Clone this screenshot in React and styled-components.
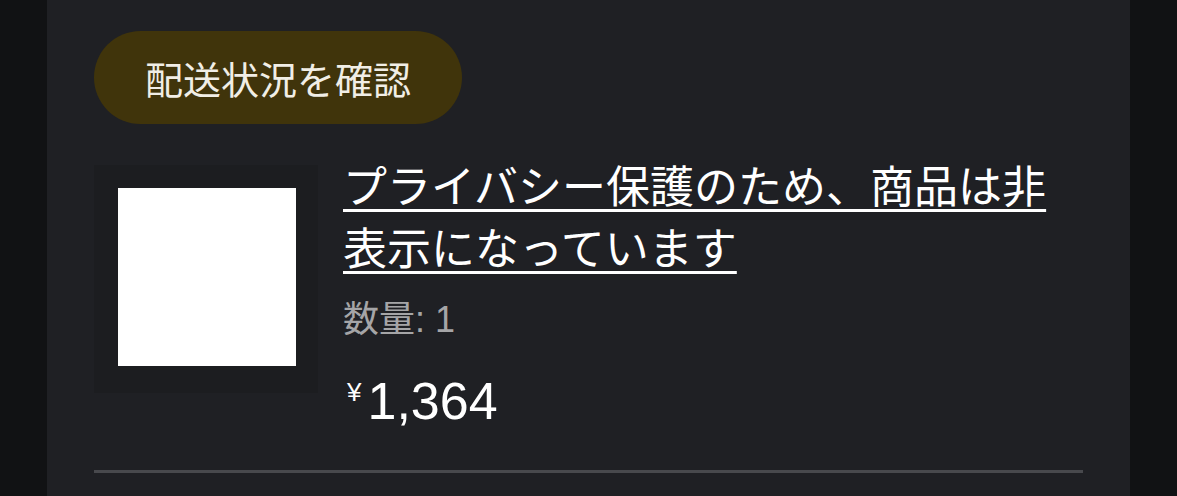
import React from 'react';
import styled, { createGlobalStyle } from 'styled-components';

const GlobalStyle = createGlobalStyle`
  html, body {
    margin: 0;
    padding: 0;
    background: #111214;
    font-family: "Noto Sans CJK JP", "Liberation Sans", sans-serif;
  }
`

const Panel = styled.div`
  margin: 0 47px;
  min-height: 496px;
  box-sizing: border-box;
  background-color: #1f2024;
  padding: 31px 47px 0;
`

const TrackButton = styled.button`
  display: inline-flex;
  align-items: center;
  justify-content: center;
  height: 93px;
  padding: 0 51px;
  border: none;
  border-radius: 47px;
  background-color: #40340b;
  color: #f1eee6;
  font-family: "Noto Sans CJK JP", sans-serif;
  font-size: 38px;
  cursor: pointer;
`

const ItemRow = styled.div`
  display: flex;
  align-items: flex-start;
  gap: 25px;
  margin-top: 32px;
  padding-bottom: 39px;
  border-bottom: 3px solid #48494d;
`

const ThumbFrame = styled.div`
  flex: none;
  width: 224px;
  height: 228px;
  margin-top: 9px;
  box-sizing: border-box;
  padding: 23px 0 0 24px;
  background-color: #1c1d20;
`

const Thumb = styled.div`
  width: 178px;
  height: 178px;
  background-color: #ffffff;
`

const Info = styled.div`
  display: flex;
  flex-direction: column;
  min-width: 0;
  flex: 1;
  margin-top: -3px;
`

const Title = styled.a`
  color: #ffffff;
  font-size: 44px;
  line-height: 62px;
  text-decoration: underline;
  text-decoration-thickness: 3px;
  text-underline-offset: 6px;
  cursor: pointer;
`

const Quantity = styled.div`
  margin-top: 21px;
  color: #a5a5a7;
  font-family: "Liberation Sans", "Noto Sans CJK JP", sans-serif;
  font-size: 36px;
  line-height: 44px;
`

const Price = styled.div`
  display: flex;
  align-items: flex-start;
  margin-top: 29px;
  color: #ffffff;
  font-family: "Liberation Sans", "Noto Sans CJK JP", sans-serif;
`

const Yen = styled.span`
  font-size: 26px;
  line-height: 26px;
  margin: 8px 6px 0 4px;
`

const Amount = styled.span`
  font-size: 52px;
  line-height: 60px;
`

const App = () => {
  return (
    <>
      <GlobalStyle />
      <Panel>
        <TrackButton>配送状況を確認</TrackButton>
        <ItemRow>
          <ThumbFrame>
            <Thumb />
          </ThumbFrame>
          <Info>
            <div>
              <Title>プライバシー保護のため、商品は非表示になっています</Title>
            </div>
            <Quantity>数量: 1</Quantity>
            <Price>
              <Yen>¥</Yen>
              <Amount>1,364</Amount>
            </Price>
          </Info>
        </ItemRow>
      </Panel>
    </>
  )
}

export default App;
